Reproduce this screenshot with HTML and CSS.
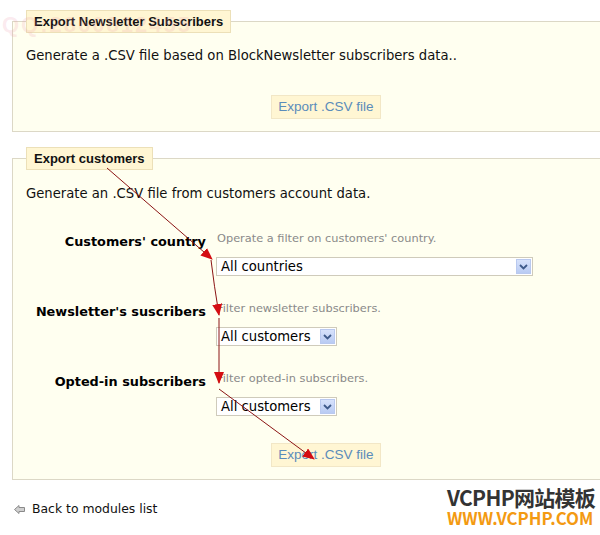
FILE: index.html
```html
<!DOCTYPE html>
<html>
<head>
<meta charset="utf-8">
<link rel="stylesheet" href="styles.css">
</head>
<body>
<div class="page">
  <fieldset class="box">
    <legend class="box-title">Export Newsletter Subscribers</legend>
    <p class="intro">Generate a .CSV file based on BlockNewsletter subscribers data..</p>
    <div class="actions"><button class="btn" type="button">Export .CSV file</button></div>
  </fieldset>

  <fieldset class="box box-customers">
    <legend class="box-title">Export customers</legend>
    <p class="intro">Generate an .CSV file from customers account data.</p>
    <div class="form">
      <div class="row">
        <label class="label">Customers' country</label>
        <div class="field">
          <p class="hint">Operate a filter on customers' country.</p>
          <div class="select select-wide"><span class="select-value">All countries</span><span class="select-arrow"><svg width="9" height="6" viewBox="0 0 9 6"><path d="M1 1 L4.5 4.5 L8 1" fill="none" stroke="#3e5a8a" stroke-width="1.8"/></svg></span></div>
        </div>
      </div>
      <div class="row">
        <label class="label">Newsletter's suscribers</label>
        <div class="field">
          <p class="hint">Filter newsletter subscribers.</p>
          <div class="select select-short"><span class="select-value">All customers</span><span class="select-arrow"><svg width="9" height="6" viewBox="0 0 9 6"><path d="M1 1 L4.5 4.5 L8 1" fill="none" stroke="#3e5a8a" stroke-width="1.8"/></svg></span></div>
        </div>
      </div>
      <div class="row">
        <label class="label">Opted-in subscribers</label>
        <div class="field">
          <p class="hint">Filter opted-in subscribers.</p>
          <div class="select select-short"><span class="select-value">All customers</span><span class="select-arrow"><svg width="9" height="6" viewBox="0 0 9 6"><path d="M1 1 L4.5 4.5 L8 1" fill="none" stroke="#3e5a8a" stroke-width="1.8"/></svg></span></div>
        </div>
      </div>
    </div>
    <div class="actions actions-bottom"><button class="btn" type="button">Export .CSV file</button></div>
  </fieldset>

  <a class="back" href="#"><svg class="back-icon" width="11" height="9" viewBox="0 0 11 9"><path d="M0.5 4.5 L5 0.5 L5 2.5 L10.5 2.5 L10.5 6.5 L5 6.5 L5 8.5 Z" fill="#d0d0d0" stroke="#8a8a8a" stroke-width="1"/></svg>Back to modules list</a>
</div>

<div class="qq-mark">QQ:2860812455</div>

<svg class="annotations" width="600" height="535" viewBox="0 0 600 535">
  <defs>
    <marker id="head" markerWidth="12" markerHeight="10" refX="11" refY="5" orient="auto" markerUnits="userSpaceOnUse">
      <path d="M0 0 L12 5 L0 10 Z" fill="#d40d12"/>
    </marker>
  </defs>
  <g fill="none" stroke="#8b1414" stroke-width="1">
    <path d="M107 168 L212 259" marker-end="url(#head)"/>
    <path d="M211 260 Q214 285 219 315" marker-end="url(#head)"/>
    <path d="M219 318 L219 383" marker-end="url(#head)"/>
    <path d="M219 389 L314 459" marker-end="url(#head)"/>
  </g>
</svg>

<div class="brand">
  <div class="brand-name">VCPHP网站模板</div>
  <div class="brand-url">WWW.VCPHP.COM</div>
</div>
</body>
</html>
```

FILE: styles.css
```css
html, body {
  margin: 0;
  padding: 0;
  background: #ffffff;
}
body {
  font-family: "DejaVu Sans", Verdana, sans-serif;
  font-size: 13px;
  color: #000;
  width: 600px;
  height: 535px;
  overflow: hidden;
  position: relative;
}
.page {
  padding: 10px 0 0 12px;
}
.box {
  width: 600px;
  margin: 0;
  padding: 14px 13px 12px;
  border: 1px solid #dcd8c6;
  background: #fffff0;
}
.box-customers {
  margin-top: 15px;
  padding-top: 15px;
  padding-bottom: 12px;
}
.box-title {
  padding: 3px 7px;
  border: 1px solid #ece0b8;
  background: #fff6d3;
  font: bold 13px/15px "Liberation Sans", Arial, sans-serif;
  color: #111;
}
.intro {
  margin: 0;
  font-size: 13.2px;
  line-height: 18px;
  color: #111;
}
.actions {
  margin-top: 30px;
  text-align: center;
}
.actions-bottom {
  margin-top: 27px;
}
.btn {
  display: inline-block;
  padding: 3px 6px;
  border: 1px solid #f2e7c6;
  background: #fff6d3;
  font: 13.5px/16px "Liberation Sans", Arial, sans-serif;
  color: #5a8cba;
  cursor: pointer;
}
.form {
  margin-top: 28px;
}
.row {
  display: grid;
  grid-template-columns: 180px 1fr;
  column-gap: 10px;
  align-items: start;
}
.row + .row {
  margin-top: 25px;
}
.label {
  text-align: right;
  font-weight: bold;
  font-size: 12.85px;
  line-height: 18px;
  padding-top: 2px;
  color: #000;
  white-space: nowrap;
}
.hint {
  margin: 0 0 0 1px;
  font-size: 11.35px;
  line-height: 14px;
  color: #8a8a8a;
}
.select {
  display: flex;
  align-items: center;
  box-sizing: border-box;
  height: 19px;
  margin-top: 12px;
  border: 1px solid #cfcbbb;
  background: #fff;
}
.select-wide { width: 317px; }
.select-short { width: 121px; }
.select-value {
  flex: 1;
  padding-left: 4px;
  font-size: 13.2px;
  line-height: 17px;
  color: #000;
  white-space: nowrap;
}
.select-arrow {
  display: flex;
  align-items: center;
  justify-content: center;
  width: 15px;
  height: 15px;
  margin-right: 1px;
  box-sizing: border-box;
  border: 1px solid #b9c9ef;
  background: linear-gradient(#d7e2fb, #b9cbf3);
}
.back {
  display: flex;
  align-items: center;
  margin-top: 20px;
  padding-left: 2px;
  line-height: 18px;
  font-size: 12.4px;
  color: #111;
  text-decoration: none;
}
.back-icon {
  margin-right: 7px;
}
.annotations {
  position: absolute;
  left: 0;
  top: 0;
  pointer-events: none;
}
.qq-mark {
  position: absolute;
  left: 2px;
  top: 12px;
  font: bold 22px/26px "Liberation Sans", Arial, sans-serif;
  letter-spacing: 2px;
  color: rgba(235, 150, 170, 0.2);
  pointer-events: none;
}
.brand {
  position: absolute;
  left: 447px;
  top: 484px;
  font-family: "Noto Sans CJK SC", "Noto Sans", sans-serif;
  font-weight: bold;
}
.brand-name {
  font-size: 21px;
  line-height: 26px;
  color: #333;
  letter-spacing: -0.7px;
}
.brand-url {
  font-size: 16.8px;
  line-height: 17px;
  color: #f39a12;
}
```
